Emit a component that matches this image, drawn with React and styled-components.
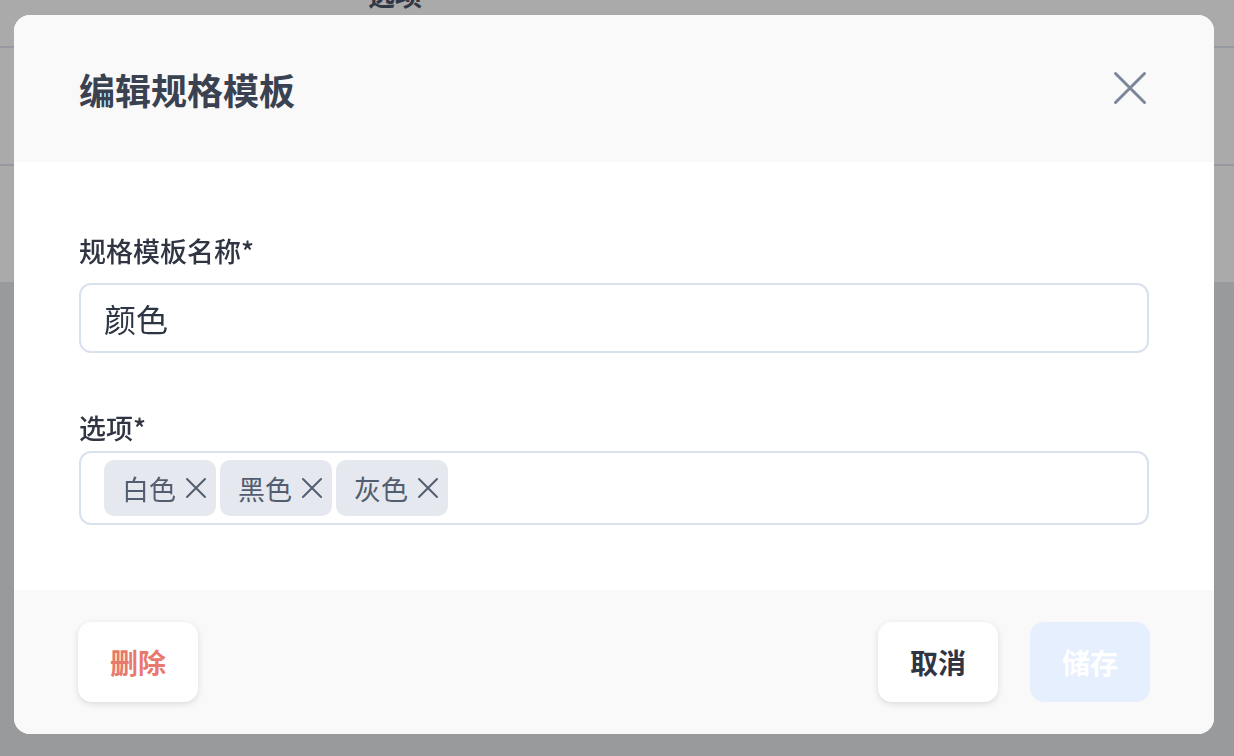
import React from "react";
import styled, { createGlobalStyle } from "styled-components";

const Global = createGlobalStyle`
  html, body { margin: 0; padding: 0; }
  body {
    font-family: "Noto Sans CJK SC", "Noto Sans", sans-serif;
    width: 1234px;
    height: 756px;
    overflow: hidden;
  }
  * { box-sizing: border-box; }
`;

const Page = styled.div`
  display: flex;
  flex-direction: column;
  height: 756px;
  background: #e5e7eb;
`;

const TopBar = styled.div`
  height: 48px;
  background: #ffffff;
  border-bottom: 2px solid #e2e8f0;
  display: flex;
  padding-left: 368px;
  overflow: hidden;
`;

const BgTitle = styled.span`
  font-size: 27px;
  font-weight: 700;
  color: #4a5568;
  line-height: 1;
  margin-top: -19px;
`;

const SubBar = styled.div`
  height: 118px;
  background: #ffffff;
  border-bottom: 2px solid #e2e8f0;
`;

const Band = styled.div`
  height: 116px;
  background: #ffffff;
`;

const Overlay = styled.div`
  position: fixed;
  inset: 0;
  background: rgba(0, 0, 0, 0.335);
  display: flex;
  align-items: flex-start;
  padding: 15px 0 0 14px;
`;

const Modal = styled.div`
  width: 1200px;
  border-radius: 16px;
  overflow: hidden;
  background: #ffffff;
  display: flex;
  flex-direction: column;
`;

const Header = styled.div`
  height: 147px;
  background: #f9f9f9;
  display: flex;
  align-items: center;
  justify-content: space-between;
  padding: 0 66px 0 65px;
`;

const Title = styled.h2`
  margin: 0;
  font-size: 36px;
  line-height: 44px;
  font-weight: 700;
  color: #3a4150;
`;

const CloseButton = styled.button`
  border: 0;
  background: none;
  padding: 0;
  width: 36px;
  height: 36px;
  margin-top: -2px;
  display: flex;
  cursor: pointer;
  color: #7c8699;
`;

const Body = styled.div`
  padding: 71px 65px 65px 65px;
  display: flex;
  flex-direction: column;
`;

const Field = styled.div`
  display: flex;
  flex-direction: column;
  gap: ${(p) => p.$gap}px;
  margin-top: ${(p) => p.$top}px;
`;

const Label = styled.label`
  font-size: 27px;
  line-height: 36px;
  font-weight: 500;
  color: #2f3542;
`;

const TextInput = styled.input`
  height: 70px;
  border: 2px solid #d9e2ec;
  border-radius: 12px;
  padding: 0 23px;
  font-family: "Noto Sans CJK SC", "Noto Sans", sans-serif;
  font-size: 32px;
  color: #2d3442;
  background: #fff;
  outline: none;
  width: 100%;
`;

const TagBox = styled.div`
  height: 74px;
  border: 2px solid #d9e2ec;
  border-radius: 12px;
  padding: 7px 23px;
  display: flex;
  align-items: center;
  gap: 4px;
`;

const Tag = styled.span`
  height: 56px;
  display: inline-flex;
  align-items: center;
  gap: 9px;
  padding: 0 9px 0 18px;
  background: #e5e8ee;
  border-radius: 10px;
  font-size: 27px;
  line-height: 1;
  color: #535d70;
`;

const TagRemove = styled.svg`
  width: 22px;
  height: 22px;
  color: #535d70;
`;

const Footer = styled.div`
  height: 144px;
  background: #f9f9f9;
  display: flex;
  align-items: center;
  padding: 0 64px;
  gap: 32px;
`;

const Spacer = styled.div`
  flex: 1;
`;

const Button = styled.button`
  width: 120px;
  height: 80px;
  border: 0;
  border-radius: 14px;
  font-family: "Noto Sans CJK SC", "Noto Sans", sans-serif;
  font-size: 28px;
  font-weight: 700;
  cursor: pointer;
  background: ${(p) => (p.$variant === "primary" ? "#e6effd" : "#ffffff")};
  color: ${(p) =>
    p.$variant === "danger" ? "#e8796e" : p.$variant === "primary" ? "#ffffff" : "#2f3542"};
  box-shadow: ${(p) =>
    p.$variant === "primary" ? "none" : "0 2px 6px rgba(0, 0, 0, 0.12)"};
`;

const XIcon = ({ size = 36, inset = 3.5, stroke = 3 }) => (
  <svg width={size} height={size} viewBox={`0 0 ${size} ${size}`} fill="none">
    <path
      d={`M${inset} ${inset} L${size - inset} ${size - inset} M${size - inset} ${inset} L${inset} ${size - inset}`}
      stroke="currentColor"
      strokeWidth={stroke}
      strokeLinecap="round"
    />
  </svg>
);

const options = ["白色", "黑色", "灰色"];

export default function App() {
  return (
    <>
      <Global />
      <Page>
        <TopBar>
          <BgTitle>选项</BgTitle>
        </TopBar>
        <SubBar />
        <Band />
      </Page>
      <Overlay>
        <Modal>
          <Header>
            <Title>编辑规格模板</Title>
            <CloseButton aria-label="关闭">
              <XIcon />
            </CloseButton>
          </Header>
          <Body>
            <Field $gap={14} $top={0}>
              <Label>规格模板名称*</Label>
              <TextInput defaultValue="颜色" />
            </Field>
            <Field $gap={5} $top={57}>
              <Label>选项*</Label>
              <TagBox>
                {options.map((o) => (
                  <Tag key={o}>
                    {o}
                    <TagRemove viewBox="0 0 22 22" fill="none">
                      <path
                        d="M2 2 L20 20 M20 2 L2 20"
                        stroke="currentColor"
                        strokeWidth="2"
                        strokeLinecap="round"
                      />
                    </TagRemove>
                  </Tag>
                ))}
              </TagBox>
            </Field>
          </Body>
          <Footer>
            <Button $variant="danger">删除</Button>
            <Spacer />
            <Button>取消</Button>
            <Button $variant="primary">储存</Button>
          </Footer>
        </Modal>
      </Overlay>
    </>
  );
}
